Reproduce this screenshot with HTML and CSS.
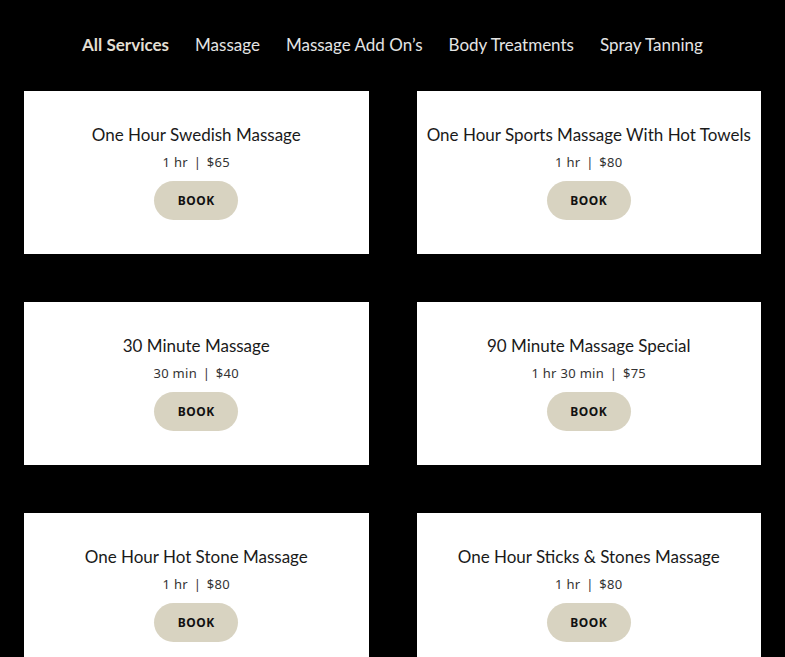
FILE: index.html
```html
<!DOCTYPE html>
<html lang="en">
  <head>
    <meta charset="UTF-8" />
    <meta name="viewport" content="width=device-width, initial-scale=1.0" />
    <title>Services</title>
    <link rel="stylesheet" href="styles.css">
  </head>
  <body>
    <nav class="tabs">
      <a class="tab active" href="#">All Services</a>
      <a class="tab" href="#">Massage</a>
      <a class="tab" href="#">Massage Add On’s</a>
      <a class="tab" href="#">Body Treatments</a>
      <a class="tab" href="#">Spray Tanning</a>
    </nav>

    <div class="services">
      <div class="card">
        <h2>One Hour Swedish Massage</h2>
        <p class="meta">1 hr <span class="sep">|</span> $65</p>
        <button>BOOK</button>
      </div>
      <div class="card">
        <h2>One Hour Sports Massage With Hot Towels</h2>
        <p class="meta">1 hr <span class="sep">|</span> $80</p>
        <button>BOOK</button>
      </div>
      <div class="card">
        <h2>30 Minute Massage</h2>
        <p class="meta">30 min <span class="sep">|</span> $40</p>
        <button>BOOK</button>
      </div>
      <div class="card">
        <h2>90 Minute Massage Special</h2>
        <p class="meta">1 hr 30 min <span class="sep">|</span> $75</p>
        <button>BOOK</button>
      </div>
      <div class="card">
        <h2>One Hour Hot Stone Massage</h2>
        <p class="meta">1 hr <span class="sep">|</span> $80</p>
        <button>BOOK</button>
      </div>
      <div class="card">
        <h2>One Hour Sticks &amp; Stones Massage</h2>
        <p class="meta">1 hr <span class="sep">|</span> $80</p>
        <button>BOOK</button>
      </div>
    </div>
  </body>
</html>
```

FILE: styles.css
```css
body {
  background-color: black;
  margin: 0;
  font-family: "Lato", "Noto Sans", sans-serif;
}

.tabs {
  display: flex;
  justify-content: center;
  gap: 26px;
  padding: 34px 0 35px;
}

.tab {
  color: #e4e4e4;
  text-decoration: none;
  font-size: 17px;
  line-height: 22px;
}

.tab.active {
  color: #e3dfd3;
  font-weight: bold;
}

.services {
  display: grid;
  grid-template-columns: 1fr 1fr;
  gap: 48px;
  padding: 0 24px;
}

.card {
  background: white;
  height: 163px;
  box-sizing: border-box;
  padding-top: 33px;
  display: flex;
  flex-direction: column;
  align-items: center;
  text-align: center;
}

.card h2 {
  margin: 0;
  font-weight: normal;
  font-size: 17px;
  line-height: 22px;
  color: #1a1a1a;
}

.meta {
  margin: 7px 0 10px;
  font-family: "Noto Sans", sans-serif;
  font-size: 13px;
  line-height: 18px;
  letter-spacing: 0.3px;
  color: #333;
}

.sep {
  margin: 0 2px;
}

button {
  width: 84px;
  height: 39px;
  border: none;
  border-radius: 20px;
  background-color: #d8d3c1;
  color: #111;
  font-family: "Noto Sans", sans-serif;
  font-weight: bold;
  font-size: 12px;
  letter-spacing: 0.5px;
  cursor: pointer;
}
```
